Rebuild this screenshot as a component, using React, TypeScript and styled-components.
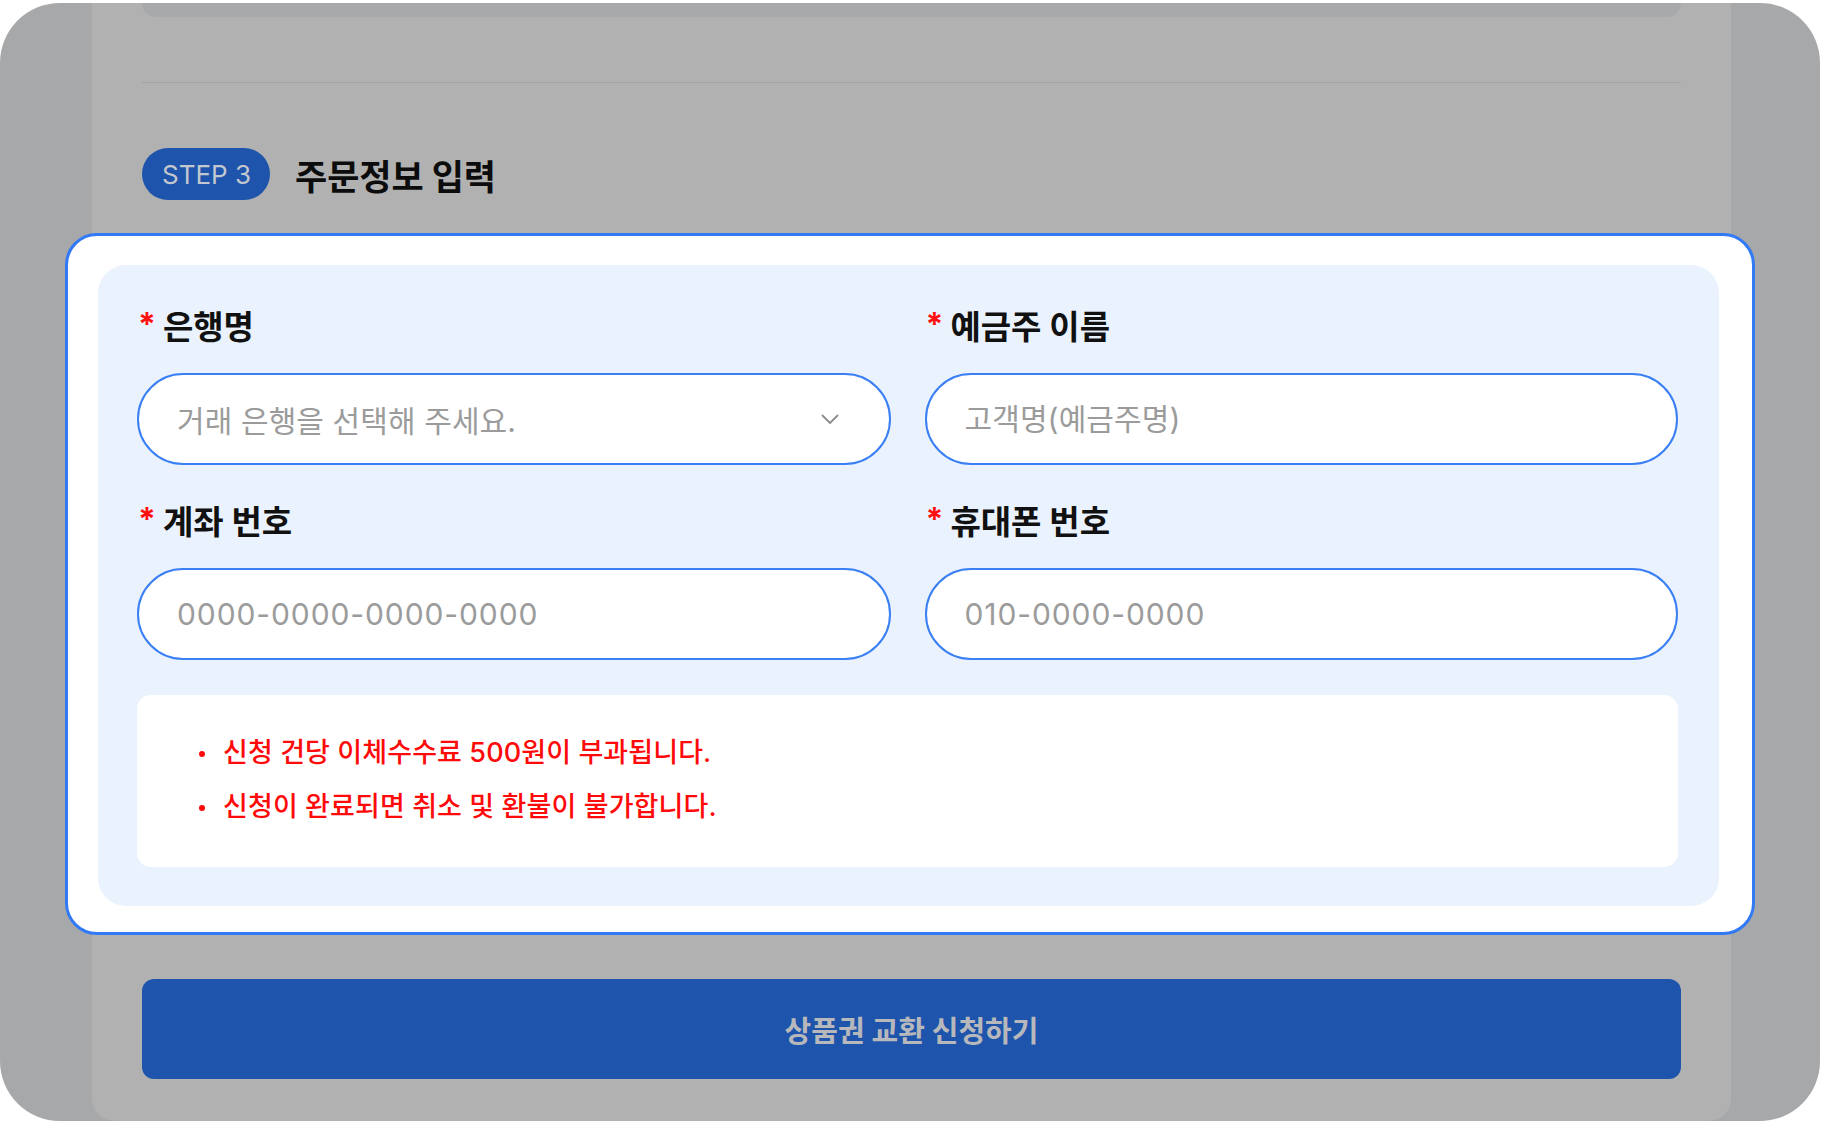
import React from "react";
import styled, { createGlobalStyle } from "styled-components";

const GlobalStyle = createGlobalStyle`
  html, body { margin: 0; padding: 0; background: #ffffff; }
  body { font-family: "Inter", "Noto Sans CJK KR", sans-serif; }
  * { box-sizing: border-box; }
`;

const Frame = styled.div`
  margin-top: 3px;
  width: 1820px;
  height: 1118px;
  border-radius: 60px;
  overflow: hidden;
  background: #a7a8aa;
  display: flex;
  padding: 0 89px 0 92px;
`;

const Column = styled.div`
  flex: 1;
  background: #b1b1b1;
  border-radius: 0 0 22px 22px;
  padding: 0 50px;
  display: flex;
  flex-direction: column;
`;

const TopCard = styled.div`
  height: 14px;
  background: #a8a9ab;
  border-radius: 0 0 28px 28px;
`;

const Divider = styled.div`
  margin-top: 65px;
  height: 1px;
  background: #a3a3a3;
`;

const StepHeader = styled.div`
  margin-top: 65px;
  display: flex;
  align-items: center;
  gap: 25px;
`;

const StepPill = styled.span`
  height: 52px;
  padding: 0 19px 0 20px;
  border-radius: 26px;
  background: #1e54ab;
  color: #c3c7cf;
  font-size: 26px;
  font-weight: 400;
  display: inline-flex;
  align-items: center;
`;

const Title = styled.h2`
  margin: 0;
  font-size: 35px;
  font-weight: 700;
  color: #0c0c0c;
  letter-spacing: -0.1px;
`;

const Card = styled.section`
  margin: 33px -74px 0 -77px;
  border: 3px solid #3179f5;
  border-radius: 32px;
  background: #ffffff;
  padding: 29px 33px 26px 30px;
`;

const Panel = styled.div`
  background: #eaf2fe;
  border-radius: 28px;
  padding: 42px 41px 39px 39px;
`;

const FieldGrid = styled.div`
  display: grid;
  grid-template-columns: 1fr 1fr;
  column-gap: 34px;
  row-gap: 37px;
`;

const Field = styled.label`
  display: flex;
  flex-direction: column;
  gap: 26px;
`;

const LabelText = styled.span`
  font-size: 33px;
  line-height: 40px;
  font-weight: 700;
  color: #111111;
  display: flex;
  align-items: center;
  gap: 7px;
  padding-left: 1px;
`;

const Required = styled.span`
  color: #ff1010;
  font-size: 32px;
  font-weight: 700;
  margin-top: -4px;
`;

const fieldBox = `
  height: 92px;
  border: 2px solid #3a80f4;
  border-radius: 46px;
  background: #ffffff;
  padding: 0 50px 0 38px;
  font-family: "Inter", "Noto Sans CJK KR", sans-serif;
  font-size: 30px;
  color: #9b9b9b;
  width: 100%;
  outline: none;
`;

const TextInput = styled.input<{ $numeric?: boolean }>`
  ${fieldBox}
  letter-spacing: ${(p) => (p.$numeric ? "0.9px" : "0.1px")};
  &::placeholder { color: #9b9b9b; }
`;

const SelectBox = styled.button`
  ${fieldBox}
  display: flex;
  align-items: center;
  justify-content: space-between;
  text-align: left;
  letter-spacing: 0.1px;
  cursor: pointer;
`;

const Notice = styled.ul`
  margin: 35px 0 0;
  list-style: none;
  background: #ffffff;
  border-radius: 14px;
  padding: 31px 0 33px 62px;
`;

const NoticeItem = styled.li`
  position: relative;
  font-size: 27px;
  font-weight: 500;
  line-height: 54px;
  color: #ff0a0a;
  padding-left: 24px;
  letter-spacing: 0.1px;
  &::before {
    content: "";
    position: absolute;
    left: 0;
    top: 25px;
    width: 6px;
    height: 6px;
    border-radius: 50%;
    background: #ff0a0a;
  }
`;

const SubmitButton = styled.button`
  margin-top: 44px;
  height: 100px;
  border: none;
  border-radius: 12px;
  background: #1e54ab;
  color: #b6b8bc;
  font-family: "Inter", "Noto Sans CJK KR", sans-serif;
  font-size: 29px;
  font-weight: 700;
  cursor: pointer;
`;

const Chevron = () => (
  <svg width="18" height="11" viewBox="0 0 18 11" fill="none">
    <polyline points="1.5,1.5 9,9 16.5,1.5" stroke="#8c8c8c" strokeWidth="1.8" strokeLinecap="round" strokeLinejoin="round" />
  </svg>
);

export default function App() {
  return (
    <>
      <GlobalStyle />
      <Frame>
        <Column>
          <TopCard />
          <Divider />
          <StepHeader>
            <StepPill>STEP 3</StepPill>
            <Title>주문정보 입력</Title>
          </StepHeader>
          <Card>
            <Panel>
              <FieldGrid>
                <Field>
                  <LabelText><Required>*</Required>은행명</LabelText>
                  <SelectBox type="button">
                    <span>거래 은행을 선택해 주세요.</span>
                    <Chevron />
                  </SelectBox>
                </Field>
                <Field>
                  <LabelText><Required>*</Required>예금주 이름</LabelText>
                  <TextInput placeholder="고객명(예금주명)" />
                </Field>
                <Field>
                  <LabelText><Required>*</Required>계좌 번호</LabelText>
                  <TextInput $numeric placeholder="0000-0000-0000-0000" />
                </Field>
                <Field>
                  <LabelText><Required>*</Required>휴대폰 번호</LabelText>
                  <TextInput $numeric placeholder="010-0000-0000" />
                </Field>
              </FieldGrid>
              <Notice>
                <NoticeItem>신청 건당 이체수수료 500원이 부과됩니다.</NoticeItem>
                <NoticeItem>신청이 완료되면 취소 및 환불이 불가합니다.</NoticeItem>
              </Notice>
            </Panel>
          </Card>
          <SubmitButton type="button">상품권 교환 신청하기</SubmitButton>
        </Column>
      </Frame>
    </>
  );
}
